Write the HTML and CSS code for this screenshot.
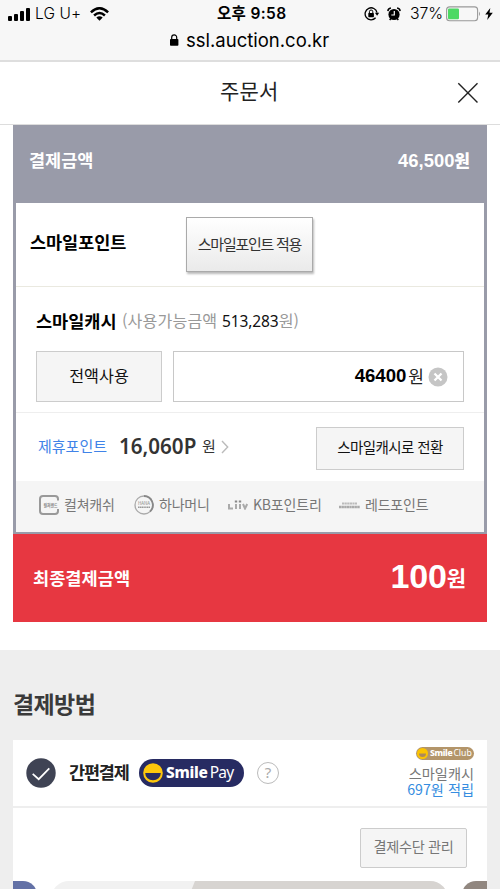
FILE: index.html
```html
<!DOCTYPE html>
<html lang="ko">
<head>
<meta charset="utf-8">
<title>주문서</title>
<link rel="stylesheet" href="styles.css">
</head>
<body>
<div class="browser">
  <div class="status">
    <svg class="signal" width="23" height="14" viewBox="0 0 23 14"><rect x="0" y="9" width="4" height="5" rx="1"/><rect x="6" y="7" width="4" height="7" rx="1"/><rect x="12" y="4" width="4" height="10" rx="1"/><rect x="18" y="1" width="4" height="13" rx="1"/></svg>
    <span class="carrier">LG U+</span>
    <svg class="wifi" width="19" height="14" viewBox="0 0 19 14"><g fill="none" stroke="#000" stroke-width="2.5"><path d="M.9 5.3Q9.5-2.7 18.1 5.3"/><path d="M4.1 8.5Q9.5 3.5 14.9 8.5"/></g><path d="M6.3 10.5Q9.5 7.8 12.7 10.5L9.5 13.8Z"/></svg>
    <span class="clock">오후 9:58</span>
    <svg class="rotlock" width="16" height="14" viewBox="0 0 16 14"><path d="M11.6 10.8A6 6 0 1 1 13 5.6" fill="none" stroke="#000" stroke-width="1.3"/><path d="M10.9 5.7h4.3l-2.1 3Z"/><rect x="4.3" y="6" width="5.6" height="4.2" rx=".6"/><path d="M5.4 6V4.7a1.7 1.7 0 0 1 3.4 0V6" fill="none" stroke="#000" stroke-width="1"/></svg>
    <svg class="alarm" width="14" height="14" viewBox="0 0 14 14"><circle cx="7" cy="7.5" r="5.6"/><path d="M.9 4.1Q1 1.4 3.9 1M13.1 4.1Q13 1.4 10.1 1M2.7 13l1.2-1.5M11.3 13l-1.2-1.5" fill="none" stroke="#000" stroke-width="1.5"/><path d="M7.3 4v4H4.3" fill="none" stroke="#f7f7f7" stroke-width="1.2"/></svg>
    <span class="percent">37%</span>
    <svg class="battery" width="36" height="16" viewBox="0 0 36 16"><rect x=".6" y=".9" width="31" height="13.8" rx="3" fill="none" stroke="#999" stroke-width="1.1"/><rect x="2" y="2.4" width="11" height="10.8" rx="1.2" fill="#4cd964"/><path d="M33 5.5q2 2.3 0 4.6Z" fill="#999"/></svg>
    <svg class="bolt" width="8" height="12" viewBox="0 0 8 12"><path d="M5.3 0 .2 6.6h3.1L2.2 12 7.8 4.8H4.5Z"/></svg>
  </div>
  <div class="address">
    <svg width="9" height="12" viewBox="0 0 9 12"><rect x="0" y="5" width="8.4" height="6.7" rx=".8"/><path d="M1.7 5.5V3.4a2.5 2.5 0 0 1 5 0v2.1" fill="none" stroke="#000" stroke-width="1.2"/></svg>
    <span class="url">ssl.auction.co.kr</span>
  </div>
</div>
<header class="titlebar">
  <h1>주문서</h1>
  <svg class="close" width="22" height="22" viewBox="0 0 22 22"><path d="M1.3 1.3l19.2 19.2M20.5 1.3L1.3 20.5" stroke="#222" stroke-width="1.4"/></svg>
</header>

<section class="summary">
  <div class="amount"><span class="amount-label">결제금액</span><b class="amount-value">46,500<i>원</i></b></div>
  <div class="details">
    <div class="row point">
      <b class="name">스마일포인트</b>
      <button class="apply">스마일포인트 적용</button>
    </div>
    <div class="row cash">
      <div class="cash-title"><b class="name">스마일캐시</b><span class="avail">(사용가능금액 <em>513,283</em>원)</span></div>
      <div class="cash-form">
        <button class="flat all">전액사용</button>
        <div class="field"><b>46400</b><span>원</span>
          <svg width="20" height="20" viewBox="0 0 20 20"><circle cx="10" cy="10" r="9.5" fill="#c5c5c5"/><path d="M6.5 6.5l7 7M13.5 6.5l-7 7" stroke="#fff" stroke-width="2.3"/></svg>
        </div>
      </div>
    </div>
    <div class="row partner">
      <span class="link">제휴포인트</span><b class="pts">16,060P</b><span class="won">원</span>
      <svg class="chev" width="8" height="14" viewBox="0 0 8 14"><path d="M1 1l5.7 6L1 13" fill="none" stroke="#bbb" stroke-width="1.4"/></svg>
      <button class="flat convert">스마일캐시로 전환</button>
    </div>
    <div class="brands">
      <div class="brand b1"><svg width="20" height="20" viewBox="0 0 20 20"><path d="M19 5.5V4Q19 1 16 1H4Q1 1 1 4v12q0 3 3 3h12q3 0 3-3v-2" fill="none" stroke="#999" stroke-width="2"/><text x="4.5" y="12" font-size="4.5" font-weight="700" textLength="14" lengthAdjust="spacingAndGlyphs">컬쳐랜드</text></svg><span>컬쳐캐쉬</span></div>
      <div class="brand b2"><svg width="20" height="20" viewBox="0 0 20 20"><circle cx="10" cy="10" r="9" fill="none" stroke="#aaa" stroke-width="1.3"/><path d="M10 1a9 9 0 0 1 6 15.5" fill="none" stroke="#888" stroke-width="1.8"/><text x="4" y="9.5" font-size="4.2" textLength="12" lengthAdjust="spacingAndGlyphs">HANA</text><path d="M4 12.3h12" stroke="#999" stroke-width="1.6" stroke-dasharray="1.4 .4"/></svg><span>하나머니</span></div>
      <div class="brand b3"><svg width="20" height="10" viewBox="0 0 20 10"><path d="M1 4v4.5h4M8 4v5M12 4v5M15 4l2 4.5L19.2 4" fill="none" stroke="#aaa" stroke-width="2"/><path d="M6.8.5h2.4v2H6.8zM10.8.5h2.4v2h-2.4z" fill="#888"/></svg><span>KB포인트리</span></div>
      <div class="brand b4"><svg width="21" height="7" viewBox="0 0 21 7"><path d="M3 1.5h15" stroke="#bbb" stroke-width="2.2" stroke-dasharray="2.2 .4"/><path d="M0 5h21" stroke="#aaa" stroke-width="2.4" stroke-dasharray="2.3 .3"/></svg><span>레드포인트</span></div>
    </div>
  </div>
  <div class="total"><span class="total-label">최종결제금액</span><b class="total-value">100</b><b class="total-won">원</b></div>
</section>

<section class="method">
  <h2>결제방법</h2>
  <div class="card">
    <div class="easy">
      <svg class="check" width="30" height="30" viewBox="0 0 30 30"><circle cx="15" cy="15" r="14.7" fill="#3f4354"/><path d="M6.7 15.8l6 5.4L23.3 10.4" fill="none" stroke="#fff" stroke-width="1.7"/></svg>
      <b class="easy-name">간편결제</b>
      <span class="pay"><svg width="20" height="20" viewBox="0 0 20 20"><circle cx="10" cy="10" r="9.8" fill="#fdc70c"/><path d="M2.2 10h15.6a7.8 7.3 0 0 1-15.6 0Z" fill="#272b62"/></svg><b>Smile</b><span>Pay</span></span>
      <span class="help">?</span>
      <div class="reward">
        <span class="club"><svg width="11" height="11" viewBox="0 0 11 11"><circle cx="5.5" cy="5.5" r="5.5" fill="#fcc400"/><path d="M2 5.5h7a3.5 3.5 0 0 1-7 0Z" fill="#ad895b"/></svg><b>Smile</b><span>Club</span></span>
        <span class="r1">스마일캐시</span>
        <span class="r2">697원 적립</span>
      </div>
    </div>
    <div class="manage-row"><button class="manage">결제수단 관리</button></div>
    <div class="slides"><div class="slide prev"></div><div class="slide current"><svg width="397" height="30" viewBox="0 0 397 30"><path d="M144 0H397V30H132Z" fill="#d7d4d1"/></svg></div><div class="slide next"></div></div>
  </div>
</section>
</body>
</html>
```
FILE: styles.css
```css
* { box-sizing: border-box; margin: 0; padding: 0; }
body {
  width: 500px; height: 889px; overflow: hidden; background: #fff; color: #000;
  font-family: "Noto Sans CJK KR", sans-serif; line-height: 1;
}
svg { display: block; flex: none; }
span, b { white-space: nowrap; }
button { font-family: inherit; white-space: nowrap; line-height: 1; border-radius: 0; flex: none; }
i, em { font-style: normal; }

.browser { height: 62px; background: #f7f7f7; border-bottom: 2px solid #dedede; }
.status { display: flex; align-items: center; height: 27px; padding-left: 8px; font-family: Inter, "Noto Sans CJK KR", sans-serif; }
.carrier { width: 47px; margin-left: 4px; font-size: 15.5px; font-weight: 300; letter-spacing: .1px; }
.wifi { margin-left: 8px; }
.clock { width: 70px; margin-left: 108px; font-size: 15.5px; font-weight: 600; letter-spacing: .35px; }
.rotlock { margin-left: 77px; }
.alarm { margin-left: 7px; }
.percent { width: 34px; margin-left: 9px; font-size: 15.8px; font-weight: 300; letter-spacing: -.1px; }
.battery { margin-left: 2px; }
.bolt { margin-left: 3px; }
.address { display: flex; align-items: center; height: 26px; padding-left: 170px; gap: 7px; font-family: Inter, sans-serif; }
.url { font-size: 18.5px; }

.titlebar { display: flex; align-items: center; height: 63px; border-bottom: 1px solid #ddd; padding-left: 220px; }
.titlebar h1 { width: 70px; padding-bottom: 5px; font-size: 21px; font-weight: 400; letter-spacing: .2px; color: #222; }
.close { margin-left: 167px; }

.summary { width: 474px; margin-left: 13px; }
.amount { display: flex; align-items: center; justify-content: space-between; height: 78px; padding: 0 17px 6px 16px; background: #999ba9; color: #fff; font-weight: 700; }
.amount-label { font-size: 17.5px; padding-bottom: 2px; }
.amount-value { font-family: "Liberation Sans", "Noto Sans CJK KR", sans-serif; font-size: 18.4px; }
.amount-value i { font-size: 17px; }
.details { height: 331px; border: 3px solid #999ba9; border-top: 0; border-bottom-width: 2px; }
.row { border-bottom: 1px solid #eee; }
.name { font-size: 17.5px; }
.point { display: flex; height: 84px; padding: 14px 0 0 14px; border-color: #eae9e0; }
.point .name { width: 156px; padding-top: 16px; letter-spacing: -.05px; }
.apply { width: 127px; height: 55px; padding-bottom: 2px; border: 1px solid #aaa; background: linear-gradient(#fff, #eaeaea); box-shadow: 1px 2px 2px #bbb; font-size: 15px; letter-spacing: -1.25px; color: #333; }
.cash { height: 126px; padding: 24px 20px 0; }
.cash-title { display: flex; align-items: center; height: 20px; }
.cash-title .name { width: 86px; }
.avail { font-size: 16.1px; color: #999; letter-spacing: .15px; }
.avail em { font-family: "Noto Sans", sans-serif; font-size: 15.5px; color: #111; letter-spacing: -.1px; }
.cash-form { display: flex; justify-content: space-between; margin-top: 20px; }
.flat { border: 1px solid #ccc; background: #f5f5f5; color: #111; }
.all { width: 126px; height: 51px; padding-bottom: 2px; font-size: 16.2px; }
.field { display: flex; align-items: center; justify-content: flex-end; width: 291px; height: 51px; padding-right: 15px; border: 1px solid #c8c8c8; }
.field b { font: 700 18.6px/1 "Liberation Sans", sans-serif; }
.field span { margin-left: 2px; padding-bottom: 2px; font-size: 17px; color: #222; }
.field svg { margin-left: 4px; }
.partner { display: flex; align-items: center; height: 68px; padding: 0 20px 0 22px; border: 0; }
.link { width: 81px; padding-bottom: 4px; font-size: 15px; color: #4083e8; }
.pts { width: 83px; padding-bottom: 2px; font: 600 20.6px/1 "Noto Sans", sans-serif; color: #333; }
.won { padding-bottom: 3px; font-size: 15px; color: #333; }
.chev { margin-left: 5px; }
.convert { width: 148px; height: 43px; margin: 3px 0 0 auto; padding-bottom: 3px; font-size: 14.5px; letter-spacing: -.6px; }
.brands { display: flex; align-items: center; height: 51px; padding: 0 0 3px 23px; background: #f5f5f5; color: #777; font-size: 14px; }
.brand { display: flex; align-items: center; gap: 5px; }
.brand span { padding-bottom: 2px; letter-spacing: -.2px; }
.brand text { fill: #888; }
.b1 { width: 95px; }
.b2 { width: 94px; }
.b3 { width: 111px; }
.total { display: flex; align-items: center; height: 88px; padding: 0 21px 0 20px; background: #e73741; color: #fff; }
.total-label { font-size: 17.6px; font-weight: 700; margin-right: auto; }
.total-value { padding-bottom: 4px; font: 700 34px/1 "Liberation Sans", sans-serif; letter-spacing: -.2px; }
.total-won { padding-bottom: 2px; font-size: 21px; }

.method { height: 239px; margin-top: 28px; padding: 42px 13px 0; overflow: hidden; background: #eee; }
.method h2 { height: 48px; font-size: 23px; font-weight: 700; letter-spacing: -.6px; color: #3a3a3a; }
.card { background: #fff; height: 160px; }
.easy { display: flex; align-items: center; height: 68px; padding: 0 13px; border-bottom: 2px solid #eee; }
.easy-name { width: 70px; margin-left: 13px; padding-bottom: 2px; font-size: 17.5px; letter-spacing: -1.2px; color: #222; }
.pay { display: flex; align-items: center; width: 105px; height: 28px; border-radius: 14px; background: #272b62; color: #fff; padding-left: 4px; font: 16px/1 "Noto Sans", sans-serif; }
.pay b { margin-left: 3px; font-size: 15.5px; font-weight: 800; letter-spacing: -.25px; }
.pay span { margin-left: 2px; font-size: 15.5px; letter-spacing: -.8px; }
.help { width: 22px; height: 22px; margin-left: 13px; border: 1.5px solid #bbb; border-radius: 50%; text-align: center; font: 15px/19px "Noto Sans", sans-serif; color: #aaa; }
.reward { display: flex; flex-direction: column; align-items: flex-end; margin-left: auto; color: #777; font-size: 14.2px; }
.club { display: flex; align-items: center; width: 58px; height: 13px; border-radius: 7px; background: #b3956a; color: #fff; padding-left: 1px; font: 8.7px/1 "Noto Sans", sans-serif; }
.club b { margin-left: 2px; font-weight: 800; letter-spacing: -.35px; }
.club span { margin-left: 1px; }
.r1 { margin-top: 6px; }
.r2 { margin-top: 2px; padding-bottom: 3px; color: #368de0; }
.manage-row { display: flex; justify-content: flex-end; height: 73px; padding: 20px 20px 0 0; }
.manage { width: 107px; height: 40px; padding-bottom: 4px; border: 1px solid #ccc; border-radius: 2px; background: #f5f5f5; color: #777; font-size: 14.2px; letter-spacing: -.3px; }
.slides { display: flex; height: 30px; gap: 14px; overflow: hidden; }
.slide { height: 30px; }
.prev { width: 24px; flex: none; border-radius: 0 14px 0 0; background: #6371a6; }
.current { width: 397px; flex: none; border-radius: 18px 18px 0 0; background: #f1f1f1; overflow: hidden; }
.next { flex: 1; border-radius: 14px 0 0 0; background: #918780; }
```
